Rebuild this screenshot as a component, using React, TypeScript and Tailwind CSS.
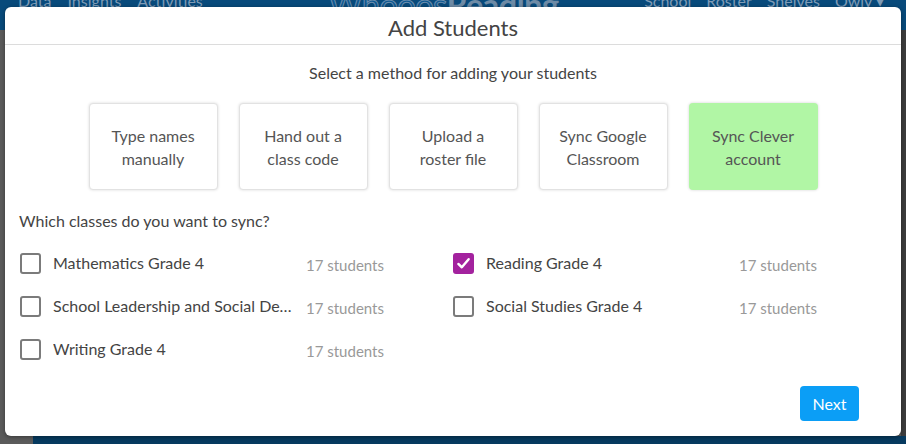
import { useState } from "react";

const methods = [
  { label: "Type names manually", active: false },
  { label: "Hand out a class code", active: false },
  { label: "Upload a roster file", active: false },
  { label: "Sync Google Classroom", active: false },
  { label: "Sync Clever account", active: true },
];

const methodLines: Record<string, [string, string]> = {
  "Type names manually": ["Type names", "manually"],
  "Hand out a class code": ["Hand out a", "class code"],
  "Upload a roster file": ["Upload a", "roster file"],
  "Sync Google Classroom": ["Sync Google", "Classroom"],
  "Sync Clever account": ["Sync Clever", "account"],
};

const classes = [
  { name: "Mathematics Grade 4", count: 17, checked: false },
  { name: "Reading Grade 4", count: 17, checked: true },
  { name: "School Leadership and Social Development", count: 17, checked: false },
  { name: "Social Studies Grade 4", count: 17, checked: false },
  { name: "Writing Grade 4", count: 17, checked: false },
];

function Checkbox({ checked, onClick }: { checked: boolean; onClick: () => void }) {
  if (checked) {
    return (
      <button
        onClick={onClick}
        className="flex h-[21px] w-[21px] shrink-0 items-center justify-center rounded-[3px] bg-[#a3229e]"
      >
        <svg viewBox="0 0 16 16" className="h-[15px] w-[15px]">
          <path d="M2.5 8.5 L6.2 12 L13.5 3.5" fill="none" stroke="#fff" strokeWidth="2.6" strokeLinecap="round" strokeLinejoin="round" />
        </svg>
      </button>
    );
  }
  return (
    <button
      onClick={onClick}
      className="h-[21px] w-[21px] shrink-0 rounded-[3px] border-2 border-[#7b7b7b] bg-white"
    />
  );
}

export default function App() {
  const [checked, setChecked] = useState(classes.map((c) => c.checked));

  return (
    <div
      className="relative h-[444px] w-[906px] overflow-hidden bg-[#5b5b5b]"
      style={{ fontFamily: "Lato, 'Open Sans', sans-serif" }}
    >
      {/* 背景のヘッダー（暗くなっている） */}
      <div className="flex h-[30px] items-start justify-between bg-[#084a7b] px-[18px] text-[16px] leading-none text-[#7f9bb6]">
        <div className="-mt-[7px] flex gap-[16px]">
          <span>Data</span>
          <span>Insights</span>
          <span>Activities</span>
        </div>
        <div className="-mt-[12px] ml-[40px] text-[33px] tracking-tight">
          <span className="text-[#0e5891] [-webkit-text-stroke:1px_#6c8eae]">Whooos</span>
          <span className="font-bold text-[#6e8ba6]">Reading</span>
        </div>
        <div className="-mt-[7px] flex gap-[15px] pr-[4px]">
          <span>School</span>
          <span>Roster</span>
          <span>Shelves</span>
          <span>Owly ▾</span>
        </div>
      </div>
      <div className="absolute bottom-0 left-[33px] right-0 h-[8px] bg-[#063a5f]" />
      <div className="absolute right-0 top-[30px] bottom-[8px] w-[5px] bg-[#3d3d3d]" />

      {/* モーダル */}
      <div className="absolute left-[5px] top-[7px] flex h-[429px] w-[896px] flex-col rounded-[6px] bg-white shadow-[0_1px_4px_rgba(0,0,0,0.4)]">
        <div className="flex h-[38px] items-center justify-center border-b border-[#dcdcdc] pt-[4px] text-[22px] text-[#444]">
          Add Students
        </div>

        <div className="mt-[16px] text-center text-[16px] text-[#444]">
          Select a method for adding your students
        </div>

        <div className="mt-[18px] flex justify-center gap-[21px]">
          {methods.map((m) => (
            <div
              key={m.label}
              className={
                m.active
                  ? "flex h-[87px] w-[129px] flex-col items-center justify-center rounded-[4px] bg-[#b1f6a5] text-[16px] leading-[23px] text-[#555] shadow-[0_0_3px_rgba(0,0,0,0.18)]"
                  : "flex h-[87px] w-[129px] flex-col items-center justify-center rounded-[4px] border border-[#e2e2e2] bg-white text-[16px] leading-[23px] text-[#555] shadow-[0_0_3px_rgba(0,0,0,0.15)]"
              }
            >
              <span>{methodLines[m.label][0]}</span>
              <span>{methodLines[m.label][1]}</span>
            </div>
          ))}
        </div>

        <div className="mt-[19px] pl-[14px] text-[16px] text-[#444]">Which classes do you want to sync?</div>

        <div className="mt-[19px] grid grid-cols-2 gap-y-[21px] pl-[15px] pr-[15px]">
          {classes.map((c, i) => (
            <div key={c.name} className="flex h-[22px] items-center">
              <Checkbox
                checked={checked[i]}
                onClick={() => setChecked(checked.map((v, j) => (j === i ? !v : v)))}
              />
              <span className="ml-[12px] w-[245px] truncate text-[16px] text-[#444]">{c.name}</span>
              <span className="ml-[8px] mt-[4px] text-[15px] text-[#999]">{c.count} students</span>
            </div>
          ))}
        </div>

        <div className="mt-auto flex justify-end pb-[15px] pr-[42px]">
          <button className="h-[35px] w-[59px] rounded-[4px] bg-[#0b9ef6] text-[16px] text-white">Next</button>
        </div>
      </div>
    </div>
  );
}
